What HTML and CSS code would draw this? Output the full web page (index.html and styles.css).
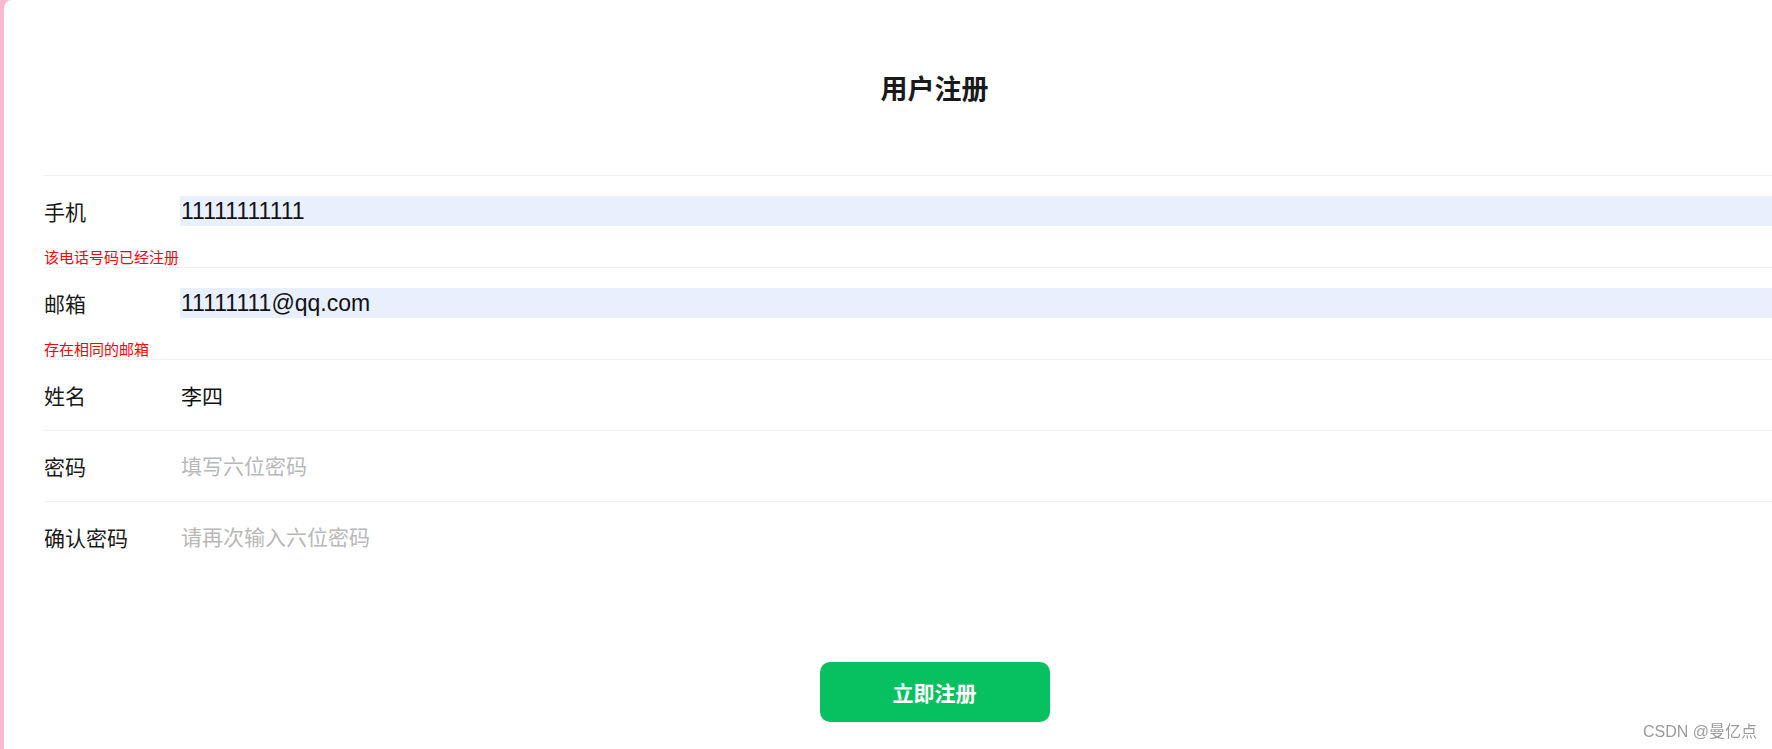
FILE: index.html
```html
<!DOCTYPE html>
<html lang="zh">
<head>
    <meta charset="UTF-8">
    <title>用户注册</title>
    <link rel="stylesheet" href="styles.css">
</head>
<body>
    <div class="card">
        <h1 class="title">用户注册</h1>
        <form class="reg-form" onsubmit="return false">
            <div class="field">
                <div class="field-row">
                    <label for="phone">手机</label>
                    <input id="phone" class="filled" type="text" value="11111111111">
                </div>
                <div class="error">该电话号码已经注册</div>
            </div>
            <div class="field">
                <div class="field-row">
                    <label for="email">邮箱</label>
                    <input id="email" class="filled" type="text" value="11111111@qq.com">
                </div>
                <div class="error">存在相同的邮箱</div>
            </div>
            <div class="field">
                <div class="field-row">
                    <label for="name">姓名</label>
                    <input id="name" class="cjk" type="text" value="李四">
                </div>
            </div>
            <div class="field">
                <div class="field-row">
                    <label for="pwd">密码</label>
                    <input id="pwd" type="password" placeholder="填写六位密码">
                </div>
            </div>
            <div class="field">
                <div class="field-row">
                    <label for="pwd2">确认密码</label>
                    <input id="pwd2" type="password" placeholder="请再次输入六位密码">
                </div>
            </div>
            <div class="actions">
                <button type="submit" class="submit-btn">立即注册</button>
            </div>
        </form>
    </div>
    <div class="watermark">CSDN @曼亿点</div>
</body>
</html>
```

FILE: styles.css
```css
html, body {
    margin: 0;
    overflow: hidden;
    height: 100%;
}

body {
    background-color: #fbb9d0;
    font-family: "Liberation Sans", "Noto Sans CJK SC", sans-serif;
    color: #1a1a1a;
    padding-left: 4px;
}

.card {
    width: 1781px;
    min-height: 100%;
    padding: 0 40px;
    background-color: #fff;
    border-top-left-radius: 8px;
}

.title {
    margin: 0;
    padding-top: 68px;
    padding-bottom: 67px;
    font-family: "Noto Sans CJK SC", sans-serif;
    font-size: 27px;
    line-height: 40px;
    font-weight: bold;
    text-align: center;
    color: #1a1a1a;
}

.field {
    border-top: 1px solid #f1f1f1;
}

.field:last-of-type {
    border-bottom: 1px solid #f1f1f1;
}

.field-row {
    display: flex;
    align-items: center;
    height: 70px;
}

.field-row label {
    width: 136px;
    flex-shrink: 0;
    font-family: "Noto Sans CJK SC", sans-serif;
    font-size: 21px;
    color: #1a1a1a;
}

.field-row input {
    flex-grow: 1;
    height: 30px;
    padding: 0 1px;
    border: none;
    outline: none;
    background: transparent;
    font-family: "Liberation Sans", "Noto Sans CJK SC", sans-serif;
    font-size: 23px;
    color: #111;
}

.field-row input.cjk {
    font-size: 21px;
}

.field-row input.filled {
    background-color: #e8f0fe;
}

.field-row input::placeholder {
    font-size: 21px;
    color: #b8b8b8;
}

.error {
    font-family: "Noto Sans CJK SC", sans-serif;
    font-size: 15px;
    line-height: 21px;
    color: #ff0000;
}

.actions {
    display: flex;
    justify-content: center;
    padding-top: 90px;
}

.submit-btn {
    width: 230px;
    height: 60px;
    border: none;
    border-radius: 10px;
    background-color: #07c160;
    color: #fff;
    font-family: "Noto Sans CJK SC", sans-serif;
    font-size: 21px;
    font-weight: bold;
    cursor: pointer;
}

.watermark {
    position: fixed;
    right: 15px;
    bottom: 7px;
    font-size: 16px;
    color: #9a9a9a;
    text-shadow: 0 0 2px #fff;
}
```
